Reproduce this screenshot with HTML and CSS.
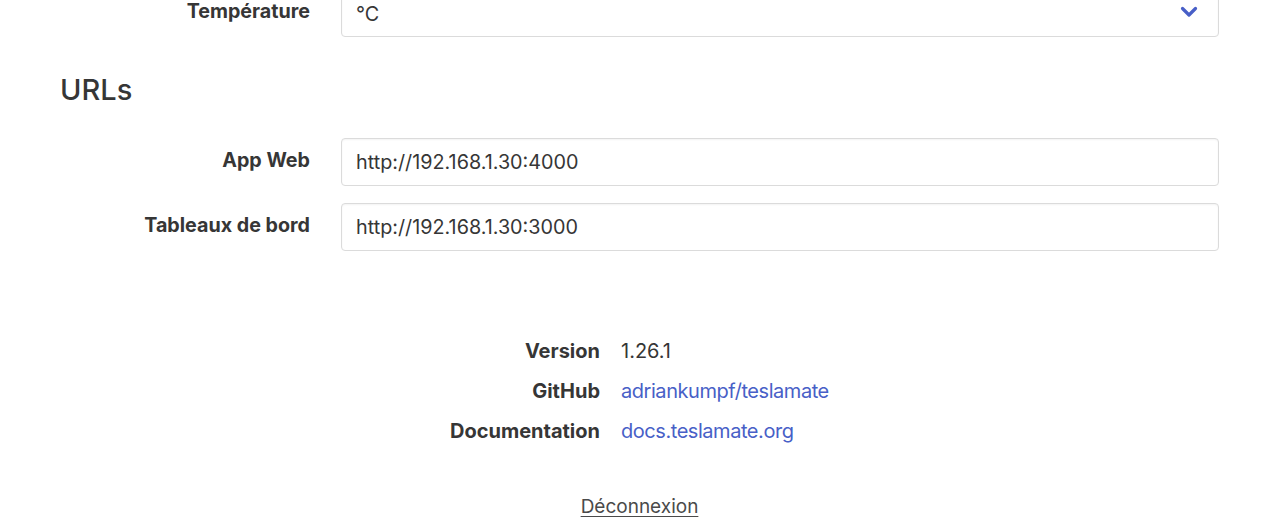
FILE: index.html
```html
<!DOCTYPE html>
<html lang="fr">
<head>
<meta charset="utf-8">
<title>Paramètres</title>
<link rel="stylesheet" href="styles.css">
</head>
<body>
<main class="settings">
  <div class="field">
    <label class="field-label">Température</label>
    <div class="control">
      <div class="select">
        <span>°C</span>
        <svg class="chevron" width="18" height="12" viewBox="0 0 18 12"><path d="M2.5 2.5 L9 9 L15.5 2.5" fill="none" stroke="currentColor" stroke-width="3.2" stroke-linecap="round" stroke-linejoin="round"/></svg>
      </div>
    </div>
  </div>

  <h2 class="section-title">URLs</h2>

  <div class="field">
    <label class="field-label">App Web</label>
    <div class="control"><div class="input">http://192.168.1.30:4000</div></div>
  </div>
  <div class="field">
    <label class="field-label">Tableaux de bord</label>
    <div class="control"><div class="input">http://192.168.1.30:3000</div></div>
  </div>

  <dl class="about">
    <dt>Version</dt><dd>1.26.1</dd>
    <dt>GitHub</dt><dd><a href="#">adriankumpf/teslamate</a></dd>
    <dt>Documentation</dt><dd><a href="#">docs.teslamate.org</a></dd>
  </dl>

  <div class="logout"><a href="#">Déconnexion</a></div>
</main>
</body>
</html>
```

FILE: styles.css
```css
html, body {
  margin: 0;
  padding: 0;
  background: #fff;
}

body {
  font-family: Inter, "Liberation Sans", sans-serif;
  color: #363636;
  font-size: 20px;
  overflow: hidden;
}

.settings {
  padding: 0 61px 0 60px;
  margin-top: -11px;
}

/* horizontal form row: right-aligned label + control */
.field {
  display: flex;
  align-items: flex-start;
  gap: 31px;
  margin-bottom: 17px;
}

.field-label {
  width: 250px;
  flex: none;
  text-align: right;
  font-weight: 700;
  font-size: 19.7px;
  padding-top: 10px;
  line-height: 24px;
}

.control {
  flex: 1;
}

.select,
.input {
  box-sizing: border-box;
  height: 48px;
  border: 1px solid #dbdbdb;
  border-radius: 4px;
  padding: 0 14px;
  display: flex;
  align-items: center;
  font-size: 19.8px;
  color: #363636;
  box-shadow: inset 0 1px 2px rgba(10, 10, 10, 0.05);
}

.select {
  justify-content: space-between;
  padding-right: 20px;
  padding-top: 2px;
}

.chevron {
  color: #485fc7;
  margin-top: -4px;
}

.section-title {
  font-size: 29px;
  font-weight: 500;
  margin: 36px 0 31px;
  line-height: 34px;
}

/* about block: two columns meeting left of the page centre */
.about {
  display: grid;
  grid-template-columns: 540px 1fr;
  column-gap: 21px;
  row-gap: 0;
  margin: 80px 0 0;
  font-size: 20px;
}

.about dt {
  text-align: right;
  font-weight: 700;
  line-height: 40px;
}

.about dd {
  margin: 0;
  line-height: 40px;
}

.about a {
  color: #485fc7;
  text-decoration: none;
  letter-spacing: -0.45px;
}

.logout {
  text-align: center;
  margin-top: 44px;
  font-size: 19px;
}

.logout a {
  color: #4a4a4a;
  text-decoration: underline;
  text-underline-offset: 3px;
}
```
